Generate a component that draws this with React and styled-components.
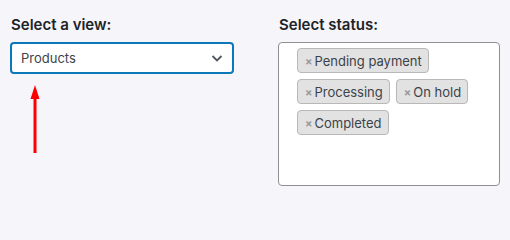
import styled, { createGlobalStyle } from "styled-components";

const Global = createGlobalStyle`
  body {
    margin: 0;
    background: #f5f5fa;
    font-family: Inter, "Noto Sans", sans-serif;
    color: #1e1e1e;
  }
`;

const Page = styled.div`
  display: grid;
  grid-template-columns: 224px 222px;
  column-gap: 44px;
  padding: 16px 10px 0 10px;
`;

const Field = styled.div`
  display: flex;
  flex-direction: column;
`;

const Label = styled.label`
  font-size: 15px;
  font-weight: 600;
  line-height: 18px;
  margin: 0 0 8px 1px;
  color: #1d2327;
`;

const Select = styled.div`
  height: 32px;
  box-sizing: border-box;
  border: 2px solid #0c77b9;
  border-radius: 4px;
  background: #fff;
  display: flex;
  align-items: center;
  justify-content: space-between;
  padding: 0 8px 0 9px;
  font-size: 13px;
  color: #3c434a;
`;

const Pointer = styled.div`
  margin: 11px 0 0 18px;
  width: 14px;
`;

const MultiBox = styled.div`
  height: 144px;
  box-sizing: border-box;
  border: 1px solid #8c8f94;
  border-radius: 4px;
  background: #fff;
  padding: 5px 12px 0 18px;
  display: flex;
  flex-wrap: wrap;
  align-content: flex-start;
  gap: 6px 6px;
`;

const Tag = styled.span`
  display: inline-flex;
  align-items: center;
  height: 25px;
  box-sizing: border-box;
  padding: 0 6px 0 7px;
  background: #e2e2e2;
  border: 1px solid #b8b8b8;
  border-radius: 4px;
  font-size: 13px;
  color: #3c434a;
`;

const Remove = styled.span`
  font-size: 11px;
  color: #999;
  margin-right: 2px;
  font-weight: 700;
`;

const statuses = ["Pending payment", "Processing", "On hold", "Completed"];

export default function App() {
  return (
    <>
      <Global />
      <Page>
        <Field>
          <Label>Select a view:</Label>
          <Select>
            Products
            <svg width="14" height="14" viewBox="0 0 14 14">
              <path d="M2.5 5 L7 9.5 L11.5 5" fill="none" stroke="#50575e" strokeWidth="1.8" />
            </svg>
          </Select>
          <Pointer>
            <svg width="14" height="70" viewBox="0 0 14 70">
              <polygon points="7,0 11.5,14 2.5,14" fill="#ff0000" />
              <rect x="5.5" y="12" width="3" height="56" fill="#ff0000" />
            </svg>
          </Pointer>
        </Field>
        <Field>
          <Label>Select status:</Label>
          <MultiBox>
            {statuses.map((s) => (
              <Tag key={s}>
                <Remove>×</Remove>
                {s}
              </Tag>
            ))}
          </MultiBox>
        </Field>
      </Page>
    </>
  );
}
